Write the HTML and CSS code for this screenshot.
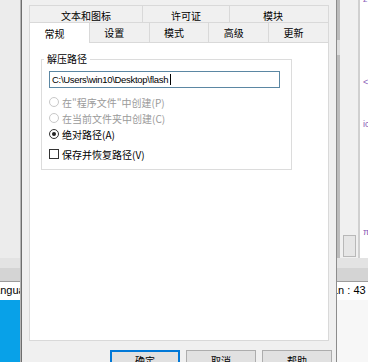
FILE: index.html
```html
<!DOCTYPE html>
<html lang="zh-CN">
<head>
    <meta charset="UTF-8">
    <title>常规</title>
    <link rel="stylesheet" href="styles.css">
</head>
<body>

<div class="left">
    <div class="left-pane"></div>
    <div class="band-light"></div>
    <div class="band-dark"></div>
    <div class="status"><span class="status-left">Language</span></div>
    <div class="taskbar"></div>
</div>

<div class="dialog">
    <div class="tabs">
        <div class="tab-row back">
            <div class="tab wide">文本和图标</div>
            <div class="tab">许可证</div>
            <div class="tab last">模块</div>
        </div>
        <div class="tab-row front">
            <div class="tab active">常规</div>
            <div class="tab">设置</div>
            <div class="tab">模式</div>
            <div class="tab">高级</div>
            <div class="tab">更新</div>
        </div>
        <div class="panel">
            <fieldset class="group">
                <legend>解压路径</legend>
                <div class="edit">C:\Users\win10\Desktop\flash<span class="caret"></span></div>
                <div class="options">
                    <div class="opt disabled"><span class="radio"></span>在"程序文件"中创建(P)</div>
                    <div class="opt disabled"><span class="radio"></span>在当前文件夹中创建(C)</div>
                    <div class="opt"><span class="radio checked"></span>绝对路径(A)</div>
                    <div class="opt check-row"><span class="check"></span>保存并恢复路径(V)</div>
                </div>
            </fieldset>
        </div>
    </div>
    <div class="buttons">
        <div class="btn default">确定</div>
        <div class="btn">取消</div>
        <div class="btn">帮助</div>
    </div>
</div>

<div class="right">
    <div class="right-top">
        <div class="scroll"><div class="thumb"></div></div>
        <div class="gutter"><div class="gutter-box"></div></div>
        <div class="sep"></div>
        <div class="code">
            <span class="c1">z</span>
            <span class="c2">&lt;</span>
            <span class="c3">ic</span>
            <span class="c4">π</span>
            <span class="c5">c</span>
        </div>
    </div>
    <div class="band-light"></div>
    <div class="band-dark"></div>
    <div class="status"><span class="status-right">Ln : 43</span></div>
    <div class="right-rest"></div>
</div>

</body>
</html>
```

FILE: styles.css
```css
* {
    box-sizing: border-box;
}

html, body {
    margin: 0;
}

body {
    width: 368px;
    height: 362px;
    overflow: hidden;
    display: flex;
    background-color: #f0f0f0;
    font-family: "Noto Sans CJK SC", "Liberation Sans", sans-serif;
    font-size: 10px;
    color: #000;
}

/* background windows, left and right of the dialog */
.left {
    width: 21px;
    flex-shrink: 0;
    display: flex;
    flex-direction: column;
    border-right: 1px solid #b4b4b4;
    overflow: hidden;
}

.left-pane {
    height: 258px;
    background-color: #ececec;
}

.band-light {
    height: 10px;
    background-color: #e3e3e3;
}

.band-dark {
    height: 14px;
    background-color: #d4d4d4;
    border-bottom: 1px solid #9c9c9c;
}

.status {
    height: 18px;
    background-color: #fff;
    font-family: "Liberation Sans", sans-serif;
    font-size: 11px;
    line-height: 17px;
    white-space: nowrap;
    overflow: hidden;
}

.status-left {
    display: inline-block;
    margin-left: -12px;
}

.status-right {
    display: inline-block;
    margin-left: -5px;
}

.taskbar {
    flex: 1;
    background-color: #08a1e8;
}

.right {
    flex: 1;
    display: flex;
    flex-direction: column;
    overflow: hidden;
    background-color: #f7f7f7;
}

.right-top {
    height: 258px;
    display: flex;
}

.scroll {
    width: 3px;
    background-color: #bcbcbc;
    padding-top: 40px;
}

.thumb {
    height: 15px;
    background-color: #dedede;
}

.gutter {
    width: 18px;
    background-color: #f0f0f0;
    display: flex;
    flex-direction: column;
    justify-content: flex-end;
    padding: 0 2px 1px 3px;
}

.gutter-box {
    height: 22px;
    border: 1px solid #b8b8b8;
    background-color: #e6e6e6;
}

.sep {
    width: 2px;
    background-color: #d0d0d0;
}

/* only the edge of the editor text shows */
.code {
    flex: 1;
    background-color: #fff;
    color: #8a5cb8;
    font-family: "Liberation Sans", sans-serif;
    font-size: 9px;
    line-height: 9px;
    display: flex;
    flex-direction: column;
    padding-left: 3px;
    overflow: hidden;
}

.c1 { margin-top: -5px; }
.c2 { margin-top: 74px; }
.c3 { margin-top: 33px; }
.c4 { margin-top: 99px; }
.c5 { margin-top: 19px; }

.right-rest {
    flex: 1;
    background-color: #f7f7f7;
}

/* the dialog */
.dialog {
    width: 316px;
    flex-shrink: 0;
    display: flex;
    flex-direction: column;
    padding-top: 5px;
    background-color: #f0f0f0;
    border-left: 1px solid #6e6e6e;
    border-right: 1px solid #8c8c8c;
    overflow: hidden;
}

.tabs {
    padding: 0 7px;
}

.tab-row {
    display: flex;
    height: 17px;
}

.tab-row.front {
    height: 20px;
}

.tab {
    flex: 1 1 0;
    display: flex;
    align-items: center;
    justify-content: center;
    background-color: #f0f0f0;
    border-top: 1px solid #d9d9d9;
    border-left: 1px solid #d9d9d9;
    white-space: nowrap;
}

.tab:last-child {
    border-right: 1px solid #d9d9d9;
}

.back .tab {
    padding-top: 2px;
}

.back .tab.wide {
    flex: 0 0 113px;
}

.back .tab.last {
    padding-right: 12px;
}

.front .tab {
    padding-right: 10px;
}

.tab.active {
    background-color: #fff;
    height: 21px;
    margin-bottom: -1px;
    position: relative;
    z-index: 1;
}

.panel {
    height: 299px;
    background-color: #fff;
    border: 1px solid #d9d9d9;
    padding-left: 11px;
}

.group {
    width: 251px;
    margin: 10px 0 0 0;
    padding: 0 0 7px 7px;
    border: 1px solid #dcdcdc;
    min-width: 0;
}

.group legend {
    margin-left: -5px;
    padding: 0 3px;
    line-height: 12px;
}

.edit {
    width: 231px;
    height: 17px;
    margin-top: 6px;
    padding-left: 2px;
    border: 1px solid #5b87a3;
    display: flex;
    align-items: center;
    font-family: "Liberation Sans", sans-serif;
    font-size: 9.5px;
    letter-spacing: -0.3px;
    white-space: nowrap;
}

.caret {
    width: 1px;
    height: 11px;
    margin-left: 2px;
    background-color: #000;
}

.options {
    margin-top: 6px;
}

.opt {
    height: 16px;
    display: flex;
    align-items: center;
    gap: 3px;
    white-space: nowrap;
}

.opt.disabled {
    color: #9a9a9a;
}

.opt.check-row {
    margin-top: 4px;
}

.radio {
    width: 10px;
    height: 10px;
    border-radius: 50%;
    border: 1px solid #333;
    background-color: #fff;
    display: flex;
    align-items: center;
    justify-content: center;
}

.disabled .radio {
    border-color: #c8c8c8;
}

.radio.checked::after {
    content: "";
    width: 4px;
    height: 4px;
    border-radius: 50%;
    background-color: #222;
}

.check {
    width: 10px;
    height: 10px;
    border: 1px solid #333;
    background-color: #fff;
}

.buttons {
    display: flex;
    justify-content: flex-end;
    gap: 6px;
    margin-top: 9px;
    padding-right: 4px;
}

.btn {
    width: 70px;
    height: 21px;
    flex-shrink: 0;
    border: 1px solid #adadad;
    background-color: #e1e1e1;
    line-height: 19px;
    text-align: center;
}

.btn.default {
    border-color: #0078d7;
    box-shadow: inset 0 0 0 1px #0078d7;
}
```
